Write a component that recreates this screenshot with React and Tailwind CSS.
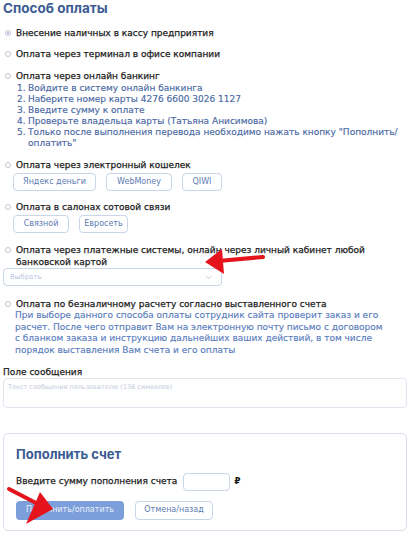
import { ChevronDown } from 'lucide-react';

function Radio({ checked, children, className = '' }) {
    return (
        <div className={`flex items-start ${className}`}>
            <div className="flex h-[12px] w-[13px] shrink-0 items-center pl-[2px]">
                <div className="flex h-[6px] w-[6px] items-center justify-center rounded-full border border-[#c0c7d3] bg-white">
                    {checked && <div className="h-[2px] w-[2px] rounded-full bg-[#8fa6d2]" />}
                </div>
            </div>
            <div className="whitespace-nowrap text-[9px] leading-[12px] text-[#1c1c1c] [-webkit-text-stroke:0.25px_#1c1c1c]">{children}</div>
        </div>
    );
}

function Chip({ children, className = '' }) {
    return (
        <div className={`flex h-[18px] items-center justify-center rounded-[4px] border border-[#c9d5e8] text-[8px] text-[#5d7bb2] ${className}`}>
            {children}
        </div>
    );
}

const steps = [
    'Войдите в систему онлайн банкинга',
    'Наберите номер карты 4276 6600 3026 1127',
    'Введите сумму к оплате',
    'Проверьте владельца карты (Татьяна Анисимова)',
    <>Только после выполнения перевода необходимо нажать кнопку "Пополнить/<br />оплатить"</>,
];

export default function App() {
    return (
        <div className="relative h-[536px] w-[413px] overflow-hidden bg-white px-[3px] font-['DejaVu_Sans',sans-serif]">
            <h2 className="font-['Inter',sans-serif] text-[13.5px] font-bold leading-[17px] text-[#3b5b93]">Способ оплаты</h2>

            <Radio checked className="mt-[10px]">Внесение наличных в кассу предприятия</Radio>
            <Radio className="mt-[9px]">Оплата через терминал в офисе компании</Radio>
            <Radio className="mt-[10px]">Оплата через онлайн банкинг</Radio>

            {/* Steps */}
            <div className="mt-[1px] whitespace-nowrap pl-[14px] text-[9px] leading-[11px] text-[#4a69a3] [-webkit-text-stroke:0.15px_#4a69a3]">
                {steps.map((s, i) => (
                    <div key={i} className="flex">
                        <span className="w-[11px] shrink-0">{i + 1}.</span>
                        <span>{s}</span>
                    </div>
                ))}
            </div>

            <Radio className="mt-[10px]">Оплата через электронный кошелек</Radio>
            <div className="mt-[2px] flex gap-[10px] pl-[10px]">
                <Chip className="w-[83px]">Яндекс деньги</Chip>
                <Chip className="w-[66px]">WebMoney</Chip>
                <Chip className="w-[40px]">QIWI</Chip>
            </div>

            <Radio className="mt-[10px]">Оплата в салонах сотовой связи</Radio>
            <div className="mt-[2px] flex gap-[10px] pl-[10px]">
                <Chip className="w-[56px]">Связной</Chip>
                <Chip className="w-[49px]">Евросеть</Chip>
            </div>

            <Radio className="mt-[11px]">
                Оплата через платежные системы, онлайн через личный кабинет любой
                <br />
                банковской картой
            </Radio>
            <div className="flex h-[18px] w-[219px] items-center justify-between rounded-[4px] border border-[#c9d5e8] pl-[6px] pr-[8px]">
                <span className="text-[7px] text-[#b7c4dc]">Выбрать</span>
                <ChevronDown size={9} strokeWidth={2} className="text-[#a8b7d2]" />
            </div>

            <Radio className="mt-[12px]">Оплата по безналичному расчету согласно выставленного счета</Radio>
            <p className="whitespace-nowrap pl-[12px] text-[9px] leading-[11.7px] text-[#5a7dbd] [-webkit-text-stroke:0.15px_#5a7dbd]">
                При выборе данного способа оплаты сотрудник сайта проверит заказ и его
                <br />
                расчет. После чего отправит Вам на электронную почту письмо с договором
                <br />
                с бланком заказа и инструкцию дальнейших ваших действий, в том числе
                <br />
                порядок выставления Вам счета и его оплаты
            </p>

            <div className="mt-[9px] text-[9px] leading-[12px] text-[#1c1c1c] [-webkit-text-stroke:0.25px_#1c1c1c]">Поле сообщения</div>
            <div className="h-[30px] w-[404px] rounded-[4px] border border-[#dfe5ee] px-[4px] pt-[3px] text-[6.5px] leading-[10px] text-[#c2cada]">
                Текст сообщения пользователю  (136 символов)
            </div>

            {/* Top up card */}
            <div className="mt-[25px] h-[98px] w-[404px] rounded-[5px] border border-[#d8dfea] px-[12px] pt-[12px]">
                <h3 className="font-['Inter',sans-serif] text-[13px] font-bold leading-[16px] text-[#3b5b93]">Пополнить счет</h3>
                <div className="mt-[11px] flex items-center">
                    <span className="text-[9px] text-[#1c1c1c] [-webkit-text-stroke:0.25px_#1c1c1c]">Введите сумму пополнения счета</span>
                    <div className="ml-[6px] h-[18px] w-[47px] rounded-[4px] border border-[#c9d5e8]" />
                    <span className="ml-[4px] text-[9px] font-bold text-[#1c1c1c]">₽</span>
                </div>
                <div className="mt-[10px] flex gap-[11px]">
                    <div className="flex h-[19px] w-[108px] items-center justify-center rounded-[4px] bg-[#7c9fdb] text-[8px] text-[#eaf0fa]">
                        Пополнить/оплатить
                    </div>
                    <div className="flex h-[19px] w-[78px] items-center justify-center rounded-[4px] border border-[#c9d5e8] text-[8px] text-[#5d7bb2]">
                        Отмена/назад
                    </div>
                </div>
            </div>

            {/* Red arrows drawn over the screenshot */}
            <svg className="pointer-events-none absolute left-0 top-0" width="413" height="536">
                <line x1="263" y1="257" x2="218" y2="261" stroke="#e5141c" strokeWidth="4" strokeLinecap="round" />
                <polygon points="205,262 222,249 224,274" fill="#e5141c" />
                <line x1="9" y1="489" x2="36" y2="503" stroke="#e5141c" strokeWidth="4" strokeLinecap="round" />
                <polygon points="53,509 40,492 26,524" fill="#e5141c" />
            </svg>
        </div>
    );
}
